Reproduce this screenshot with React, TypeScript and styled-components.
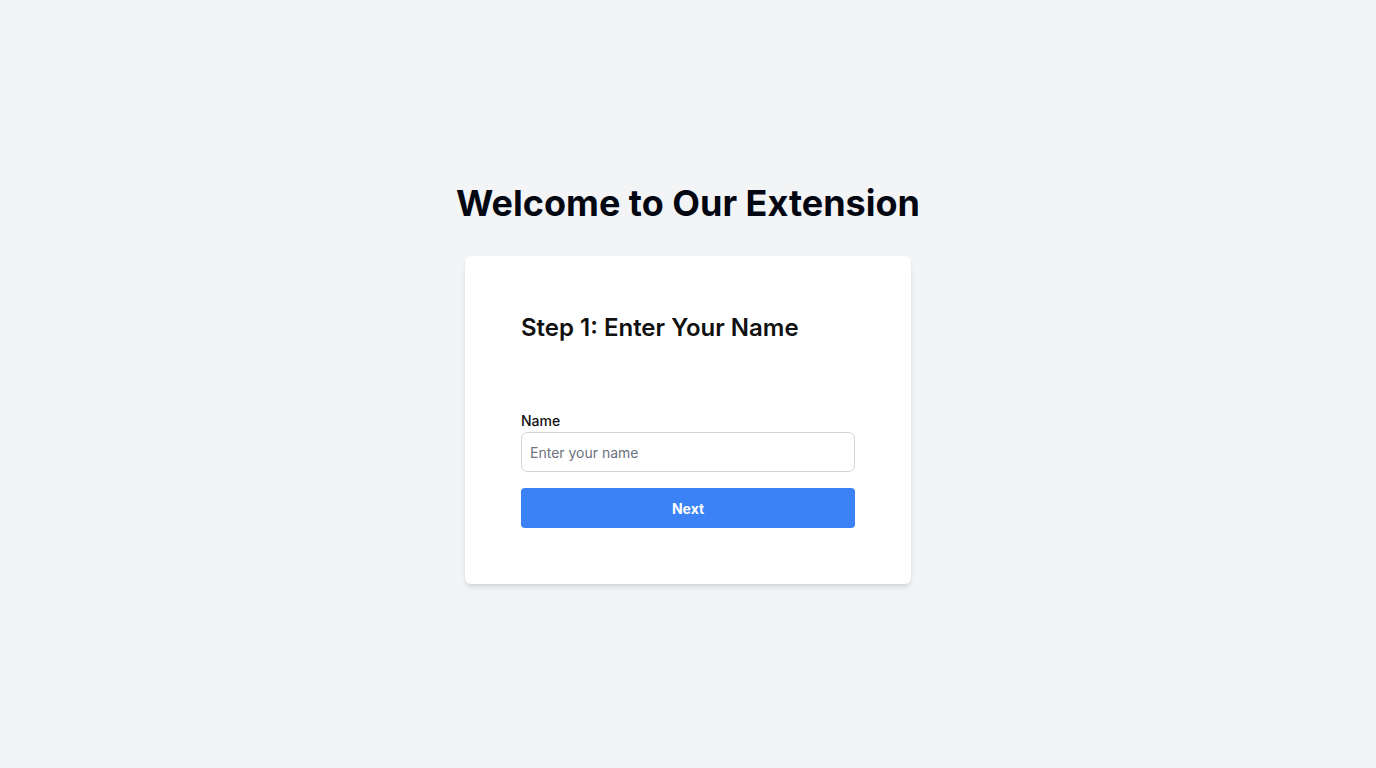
import * as React from "react"
import styled, { createGlobalStyle } from "styled-components"

const GlobalStyle = createGlobalStyle`
  html, body {
    margin: 0;
    padding: 0;
    background: #f3f4f6;
    font-family: Inter, "Noto Sans", "Liberation Sans", sans-serif;
    color: #111827;
  }
  * {
    box-sizing: border-box;
  }
`

const Page = styled.div`
  min-height: 100vh;
  padding-bottom: 1px;
  display: flex;
  flex-direction: column;
  align-items: center;
  justify-content: center;
`

const Title = styled.h1`
  margin: 0 0 33px;
  font-size: 36px;
  line-height: 40px;
  font-weight: 700;
  color: #030712;
`

const Card = styled.div`
  width: 446px;
  background: #ffffff;
  border-radius: 6px;
  box-shadow: 0 4px 6px -1px rgba(0, 0, 0, 0.1), 0 2px 4px -2px rgba(0, 0, 0, 0.1);
  padding: 56px;
`

const StepTitle = styled.h2`
  margin: 0 0 67px;
  font-size: 24px;
  line-height: 32px;
  font-weight: 600;
  color: #111111;
`

const Field = styled.div`
  display: flex;
  flex-direction: column;
  gap: 1px;
`

const Label = styled.label`
  font-size: 14px;
  line-height: 20px;
  font-weight: 500;
  color: #111111;
`

const Input = styled.input`
  width: 100%;
  height: 40px;
  padding: 0 8px;
  border: 1px solid #d1d5db;
  border-radius: 6px;
  font-family: inherit;
  font-size: 14px;
  color: #111827;
  outline: none;

  &::placeholder {
    color: #6b7280;
  }
`

const Button = styled.button`
  width: 100%;
  height: 40px;
  margin-top: 16px;
  border: none;
  border-radius: 4px;
  background: #3b82f6;
  color: #ffffff;
  font-family: inherit;
  font-size: 14px;
  font-weight: 700;
  cursor: pointer;
`

export default function App() {
  const [name, setName] = React.useState("")

  return <>
    <GlobalStyle />
    <Page>
      <Title>Welcome to Our Extension</Title>
      <Card>
        <StepTitle>Step 1: Enter Your Name</StepTitle>
        <Field>
          <Label htmlFor="name">Name</Label>
          <Input
            id="name"
            placeholder="Enter your name"
            value={name}
            onChange={(e) => setName(e.target.value)} />
        </Field>
        <Button type="button">Next</Button>
      </Card>
    </Page>
  </>
}
